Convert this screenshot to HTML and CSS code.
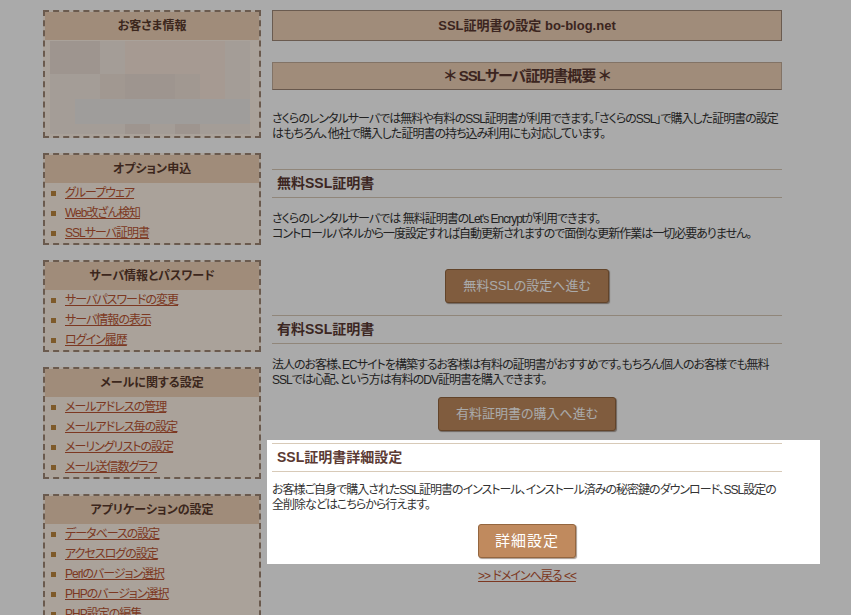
FILE: index.html
```html
<!DOCTYPE html>
<html lang="ja">
<head>
    <meta charset="utf-8">
    <title>SSL証明書の設定</title>
    <link rel="stylesheet" href="styles.css">
</head>
<body>
<div class="page">
    <div class="side">
        <div class="menu">
            <h2>お客さま情報</h2>
            <div class="mosaic">
                <span class="d"></span><span class="d"></span><span class="l"></span><span class="p"></span><span class="p"></span><span class="p"></span><span class="p"></span><span class="l"></span>
                <span class="l"></span><span class="l"></span><span class="m"></span><span class="d"></span><span class="d"></span><span class="m"></span><span class="p"></span><span class="l"></span>
                <span class="l"></span><span class="g"></span><span class="g"></span><span class="g"></span><span class="g"></span><span class="g"></span><span class="g"></span><span class="g"></span>
                <span class="l"></span><span class="l"></span><span class="l"></span><span class="d"></span><span class="l"></span><span class="d"></span><span class="l"></span><span class="l"></span>
            </div>
        </div>
        <div class="menu">
            <h2>オプション申込</h2>
            <ul>
                <li><a href="#">グループウェア</a></li>
                <li><a href="#">Web改ざん検知</a></li>
                <li><a href="#">SSLサーバ証明書</a></li>
            </ul>
        </div>
        <div class="menu">
            <h2>サーバ情報とパスワード</h2>
            <ul>
                <li><a href="#">サーバパスワードの変更</a></li>
                <li><a href="#">サーバ情報の表示</a></li>
                <li><a href="#">ログイン履歴</a></li>
            </ul>
        </div>
        <div class="menu">
            <h2>メールに関する設定</h2>
            <ul>
                <li><a href="#">メールアドレスの管理</a></li>
                <li><a href="#">メールアドレス毎の設定</a></li>
                <li><a href="#">メーリングリストの設定</a></li>
                <li><a href="#">メール送信数グラフ</a></li>
            </ul>
        </div>
        <div class="menu">
            <h2>アプリケーションの設定</h2>
            <ul>
                <li><a href="#">データベースの設定</a></li>
                <li><a href="#">アクセスログの設定</a></li>
                <li><a href="#">Perlのバージョン選択</a></li>
                <li><a href="#">PHPのバージョン選択</a></li>
                <li><a href="#">PHP設定の編集</a></li>
            </ul>
        </div>
    </div>

    <div class="main">
        <h1 class="title">SSL証明書の設定 bo-blog.net</h1>
        <h2 class="subtitle">＊ SSLサーバ証明書概要 ＊</h2>
        <p class="lead">さくらのレンタルサーバでは無料や有料のSSL証明書が利用できます。「さくらのSSL」で購入した証明書の設定はもちろん、他社で購入した証明書の持ち込み利用にも対応しています。</p>

        <div class="sec">
            <h3>無料SSL証明書</h3>
            <p>さくらのレンタルサーバでは 無料証明書のLet's Encryptが利用できます。<br>コントロールパネルから一度設定すれば自動更新されますので面倒な更新作業は一切必要ありません。</p>
            <div class="act wide"><a class="btn" href="#">無料SSLの設定へ進む</a></div>
        </div>

        <div class="sec">
            <h3>有料SSL証明書</h3>
            <p>法人のお客様、ECサイトを構築するお客様は有料の証明書がおすすめです。もちろん個人のお客様でも無料SSLでは心配、という方は有料のDV証明書を購入できます。</p>
            <div class="act"><a class="btn" href="#">有料証明書の購入へ進む</a></div>
        </div>

        <div class="sec focus">
            <h3>SSL証明書詳細設定</h3>
            <p>お客様ご自身で購入されたSSL証明書のインストール、インストール済みの秘密鍵のダウンロード、SSL設定の<br>全削除などはこちらから行えます。</p>
            <div class="act"><a class="btn big" href="#">詳細設定</a></div>
        </div>

        <p class="back"><a href="#">&gt;&gt; ドメインへ戻る &lt;&lt;</a></p>
    </div>
</div>
</body>
</html>
```

FILE: styles.css
```css
html {
    background: #fff;
}

body {
    margin: 0;
    font-family: "Liberation Sans", "Noto Sans CJK JP", sans-serif;
    font-size: 12px;
    line-height: 15px;
    letter-spacing: -1px;
    color: #333;
    font-feature-settings: "palt";
}

a {
    color: #bb5533;
}

.page {
    display: flex;
    align-items: flex-start;
    gap: 11px;
    padding: 10px 0 0 43px;
}

/* left menu */
.side {
    width: 218px;
    flex: none;
    display: flex;
    flex-direction: column;
    gap: 15px;
}

.menu {
    border: 2px dashed #9f8775;
    background: #fff4e7;
}

.menu h2 {
    margin: 0;
    height: 28px;
    line-height: 28px;
    background: #f0d2b7;
    text-align: center;
    font-size: 12px;
    letter-spacing: 0;
    color: #5a3a2c;
}

.menu ul {
    margin: 0;
    padding: 0;
    list-style: none;
}

.menu li {
    height: 20px;
    line-height: 20px;
    padding-left: 6px;
}

.menu li::before {
    content: "";
    display: inline-block;
    width: 5px;
    height: 5px;
    margin-right: 9px;
    vertical-align: middle;
    background: #be873f;
}

.mosaic {
    display: grid;
    grid-template-columns: repeat(8, 25px);
    grid-template-rows: 33px 25px 25px 10px;
    margin: 1px 0 2px 5px;
}

.mosaic .l { background: #f6ece3; }
.mosaic .p { background: #f9e8dc; }
.mosaic .d { background: #ede0d7; }
.mosaic .m { background: #f2e4da; }
.mosaic .g { background: #efece9; }

/* main column */
.main {
    width: 510px;
    flex: none;
}

.title {
    margin: 0;
    height: 29px;
    line-height: 29px;
    border: 1px solid #a08978;
    background: #f0d2b7;
    text-align: center;
    font-size: 13px;
    letter-spacing: 0;
    color: #5a3830;
}

.subtitle {
    margin: 21px 0 0;
    height: 26px;
    line-height: 26px;
    border: 1px solid #c4ad9a;
    border-bottom-color: #9c8574;
    background: #f0d2b7;
    text-align: center;
    font-size: 15px;
    color: #5a3830;
}

.lead {
    margin: 22px 0 0;
}

.sec {
    margin-top: 27px;
}

.sec + .sec {
    margin-top: 12px;
}

.sec h3 {
    margin: 0;
    height: 27px;
    line-height: 27px;
    padding-left: 5px;
    border-top: 1px solid #d8cab8;
    border-bottom: 1px solid #d8cab8;
    font-size: 14px;
    letter-spacing: 0;
    color: #5b3a33;
}

.sec p {
    margin: 14px 0 0;
}

.act {
    margin-top: 9px;
    text-align: center;
}

.act.wide {
    margin-top: 27px;
}

.btn {
    display: inline-block;
    height: 32px;
    line-height: 32px;
    padding: 0 17px;
    border: 1px solid #94663f;
    border-radius: 3px;
    background: #c08a5e;
    box-shadow: 1px 1px 1px rgba(60, 30, 10, .45);
    color: #fff;
    font-size: 13px;
    letter-spacing: 0;
    text-decoration: none;
}

.btn.big {
    padding: 0 16px;
    font-size: 15px;
    letter-spacing: 1px;
}

/* highlighted block, the rest of the page is dimmed */
.sec.focus {
    position: relative;
    z-index: 1;
    margin: 9px -38px 0 -5px;
    padding: 3px 38px 6px 5px;
    background: #fff;
    box-shadow: 0 0 0 2000px rgba(0, 0, 0, .333);
}

.focus p {
    margin-top: 11px;
}

.focus .act {
    margin-top: 11px;
}

.back {
    margin: 5px 0 0;
    text-align: center;
}
```
